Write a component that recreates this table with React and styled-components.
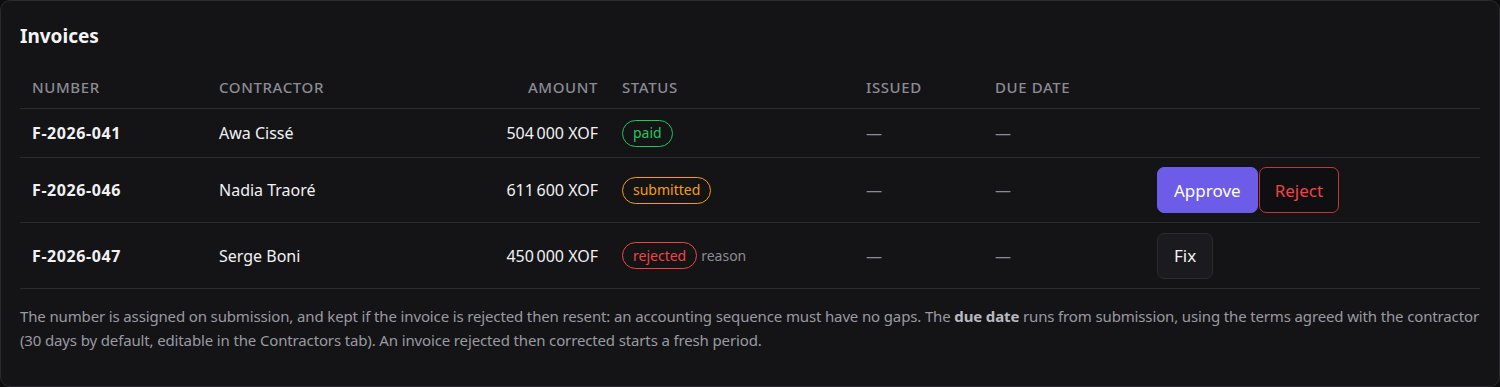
import React from "react";
import styled, { createGlobalStyle } from "styled-components";

const Global = createGlobalStyle`
  html, body { margin: 0; padding: 0; background: #0c0c0e; }
  body { font-family: "Noto Sans", "Open Sans", sans-serif; color: #ececef; }
  * { box-sizing: border-box; }
`;

const Card = styled.section`
  width: 1500px;
  height: 387px;
  background: #141416;
  border: 1px solid #2a2a2f;
  border-radius: 10px;
  padding: 20px 19px 20px 19px;
`;

const Title = styled.h2`
  margin: 0 0 18px 0;
  font-size: 19px;
  font-weight: 700;
  line-height: 30px;
  color: #f4f4f6;
`;

const Table = styled.table`
  width: 100%;
  border-collapse: collapse;
  table-layout: fixed;
`;

const Th = styled.th`
  text-align: ${(p) => (p.$right ? "right" : "left")};
  font-size: 15px;
  font-weight: 500;
  letter-spacing: 0.6px;
  text-transform: uppercase;
  color: #8b8b94;
  padding: 8px 12px 11px 12px;
  border-bottom: 1px solid #2a2a2f;
  line-height: 20px;
`;

const Td = styled.td`
  text-align: ${(p) => (p.$right ? "right" : "left")};
  font-size: 16px;
  font-weight: ${(p) => (p.$bold ? 700 : 400)};
  letter-spacing: ${(p) => (p.$bold ? "0.6px" : "normal")};
  color: ${(p) => (p.$muted ? "#8b8b94" : "#f1f1f4")};
  padding: 0 12px;
  height: ${(p) => p.$h}px;
  border-bottom: 1px solid #2a2a2f;
  white-space: nowrap;
  vertical-align: middle;
`;

const tones = {
  paid: "#22c55e",
  submitted: "#f59e0b",
  rejected: "#ef4444",
};

const Badge = styled.span`
  display: inline-flex;
  align-items: center;
  height: 27px;
  padding: 0 10px;
  border-radius: 999px;
  border: 1px solid ${(p) => tones[p.$tone]};
  color: ${(p) => tones[p.$tone]};
  font-size: 14px;
  line-height: 1;
`;

const Reason = styled.span`
  margin-left: 4px;
  font-size: 14px;
  color: #8b8b94;
`;

const Actions = styled.div`
  display: flex;
  gap: 1px;
`;

const Button = styled.button`
  font-family: inherit;
  font-size: 17px;
  height: 46px;
  padding: 0 16px;
  border-radius: 7px;
  cursor: pointer;
  ${(p) =>
    p.$variant === "primary"
      ? `background:#6c5ce7;border:1px solid #6c5ce7;color:#ffffff;`
      : p.$variant === "danger"
      ? `background:#0f0f11;border:1px solid #c2363a;color:#ef4444;padding:0 15px;`
      : `background:#1b1b1f;border:1px solid #2a2a2f;color:#f1f1f4;`}
`;

const Note = styled.p`
  margin: 15px 0 0 0;
  font-size: 15px;
  letter-spacing: -0.14px;
  line-height: 24px;
  color: #9a9aa3;
  b { color: #b9b9c1; font-weight: 700; }
`;

const Dash = () => <>—</>;

const rows = [
  { num: "F-2026-041", who: "Awa Cissé", amt: "504\u202F000 XOF", status: "paid", h: 49 },
  { num: "F-2026-046", who: "Nadia Traoré", amt: "611\u202F600 XOF", status: "submitted", h: 65, actions: "review" },
  { num: "F-2026-047", who: "Serge Boni", amt: "450\u202F000 XOF", status: "rejected", h: 66, actions: "fix" },
];

export default function App() {
  return (
    <>
      <Global />
      <Card>
        <Title>Invoices</Title>
        <Table>
          <colgroup>
            <col style={{ width: 187 }} />
            <col style={{ width: 216 }} />
            <col style={{ width: 187 }} />
            <col style={{ width: 244 }} />
            <col style={{ width: 129 }} />
            <col style={{ width: 162 }} />
            <col />
          </colgroup>
          <thead>
            <tr>
              <Th>Number</Th>
              <Th>Contractor</Th>
              <Th $right>Amount</Th>
              <Th>Status</Th>
              <Th>Issued</Th>
              <Th>Due date</Th>
              <Th />
            </tr>
          </thead>
          <tbody>
            {rows.map((r) => (
              <tr key={r.num}>
                <Td $h={r.h} $bold>{r.num}</Td>
                <Td $h={r.h}>{r.who}</Td>
                <Td $h={r.h} $right>{r.amt}</Td>
                <Td $h={r.h}>
                  <Badge $tone={r.status}>{r.status}</Badge>
                  {r.status === "rejected" && <Reason>reason</Reason>}
                </Td>
                <Td $h={r.h} $muted><Dash /></Td>
                <Td $h={r.h} $muted><Dash /></Td>
                <Td $h={r.h}>
                  {r.actions === "review" && (
                    <Actions>
                      <Button $variant="primary">Approve</Button>
                      <Button $variant="danger">Reject</Button>
                    </Actions>
                  )}
                  {r.actions === "fix" && (
                    <Actions>
                      <Button>Fix</Button>
                    </Actions>
                  )}
                </Td>
              </tr>
            ))}
          </tbody>
        </Table>
        <Note>
          The number is assigned on submission, and kept if the invoice is rejected then resent: an accounting sequence must have no gaps. The <b>due date</b> runs from submission, using the terms agreed with the contractor (30 days by default, editable in the Contractors tab). An invoice rejected then corrected starts a fresh period.
        </Note>
      </Card>
    </>
  );
}
